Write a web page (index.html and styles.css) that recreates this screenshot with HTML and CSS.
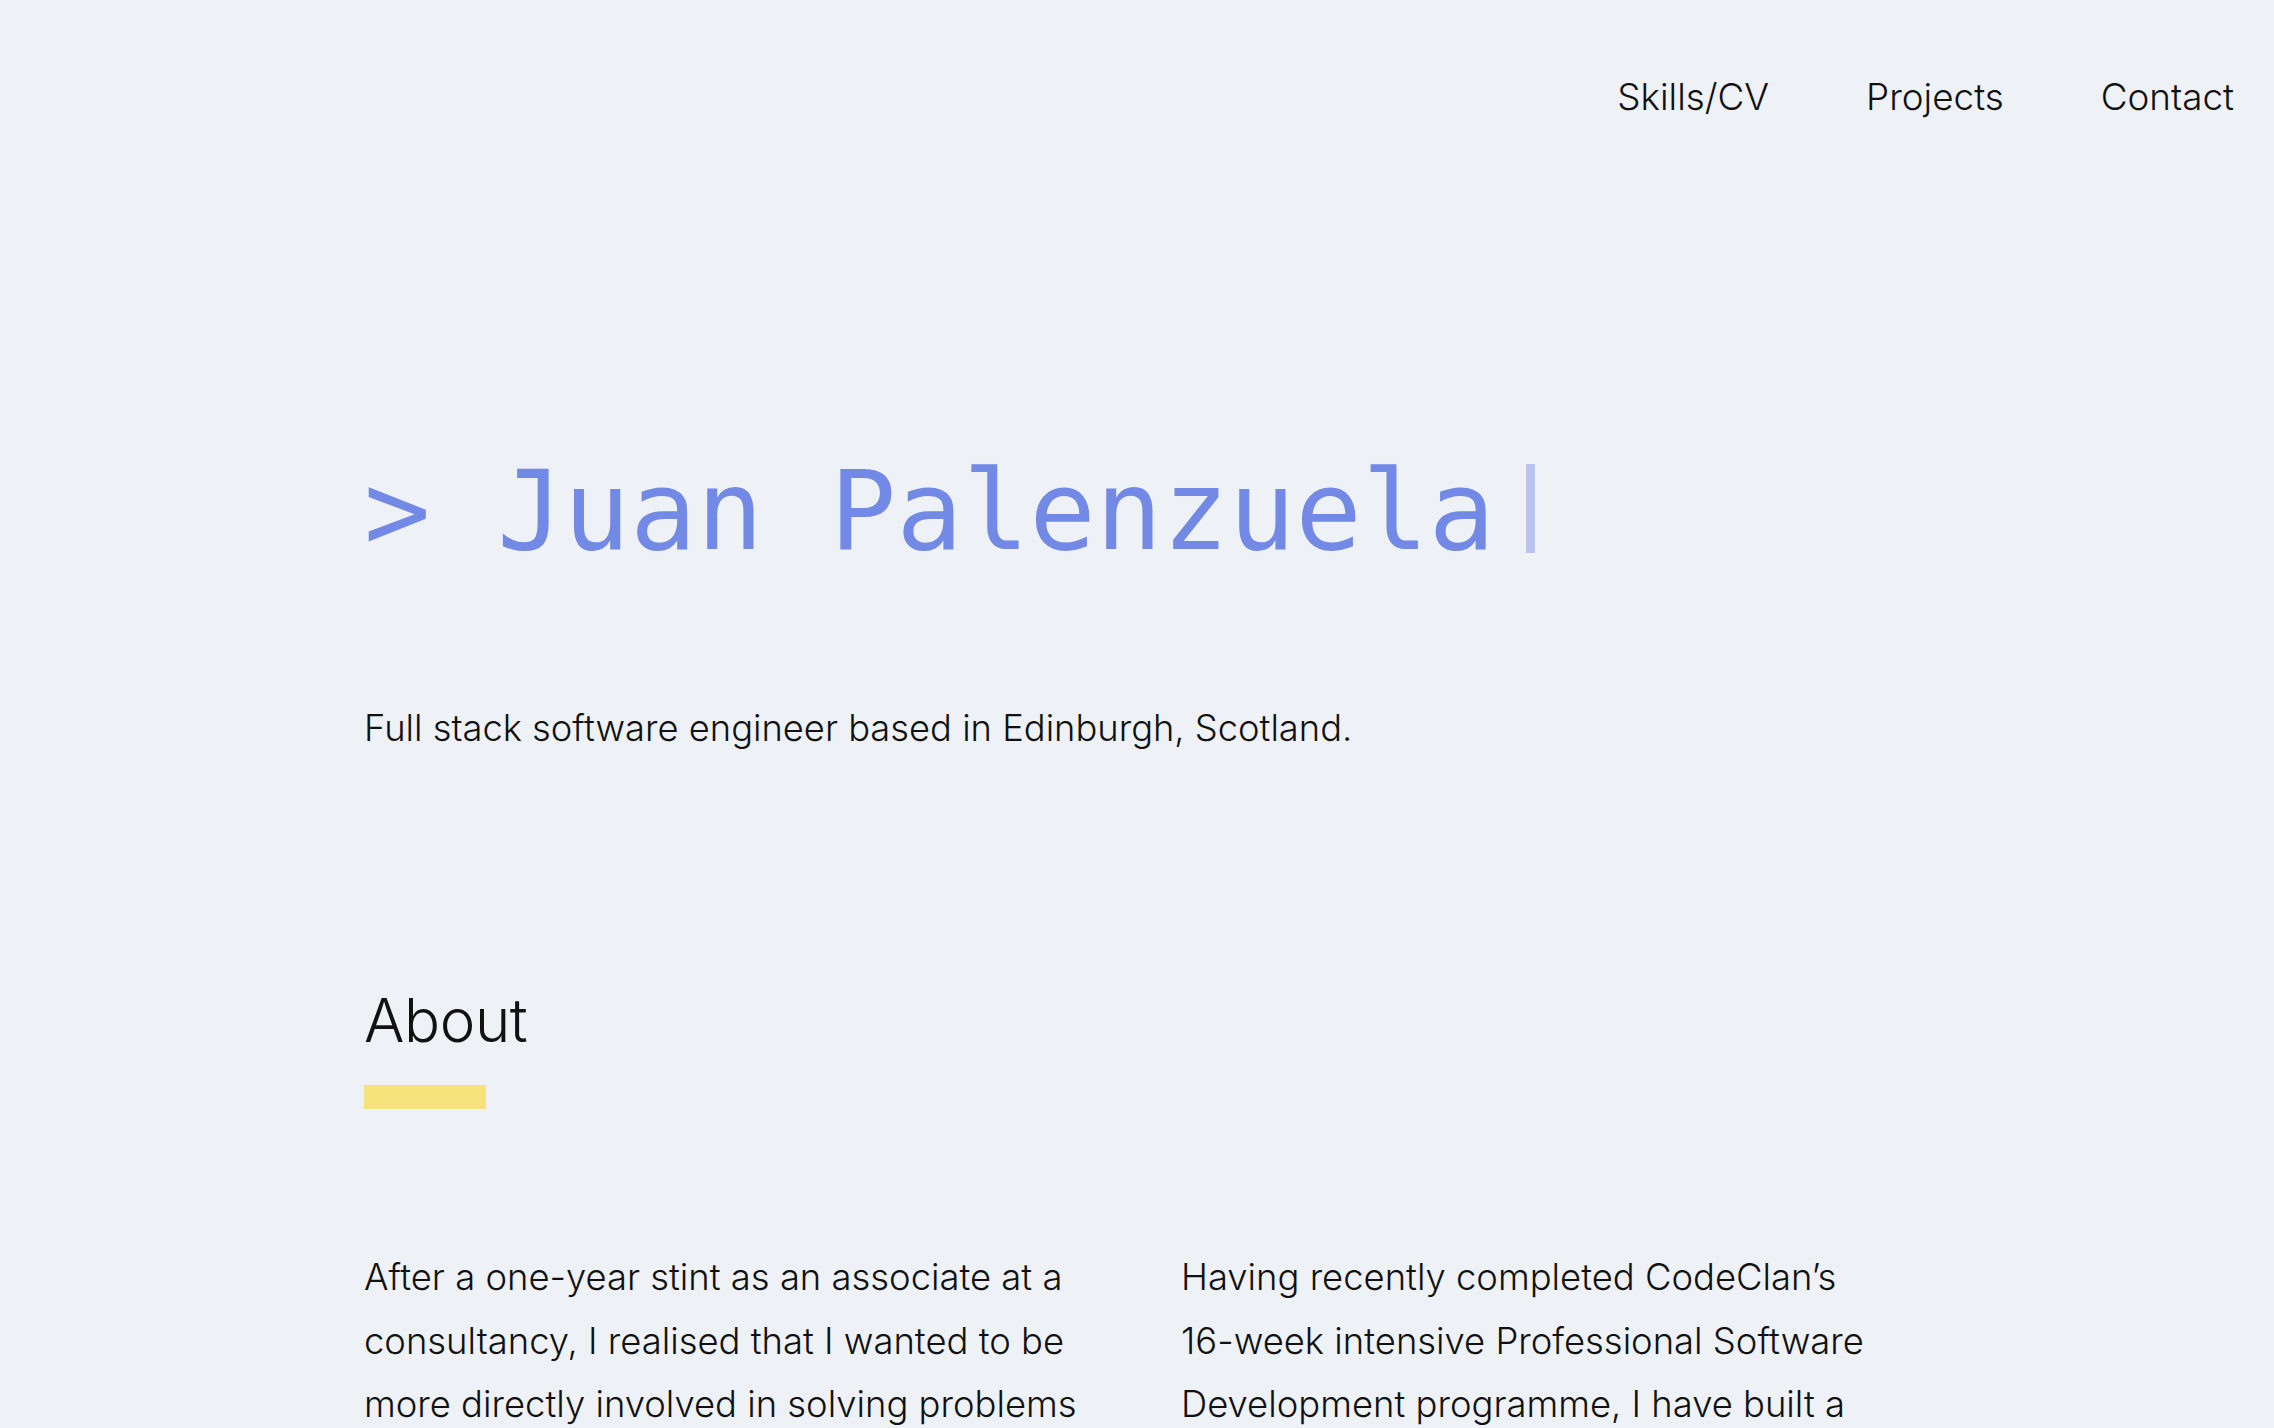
FILE: index.html
```html
<!DOCTYPE html>
<html lang="en">
<head>
<meta charset="utf-8">
<title>Juan Palenzuela</title>
<link rel="stylesheet" href="styles.css">
</head>
<body>
<header class="site-header">
  <nav class="nav">
    <a class="nav-link" href="#skills">Skills/CV</a>
    <a class="nav-link" href="#projects">Projects</a>
    <a class="nav-link" href="#contact">Contact</a>
  </nav>
</header>
<main class="content">
  <section class="hero">
    <h1 class="hero-title">&gt; Juan Palenzuela<span class="cursor"></span></h1>
    <p class="hero-sub">Full stack software engineer based in Edinburgh, Scotland.</p>
  </section>
  <section class="about">
    <h2 class="section-title">About</h2>
    <div class="section-bar"></div>
    <div class="about-cols">
      <p class="about-text">After a <span class="nowrap">one-year</span> stint as an associate at a consultancy, I realised that I wanted to be more directly involved in solving problems and building things, which led me to software development.</p>
      <p class="about-text">Having recently completed CodeClan’s <span class="nowrap">16-week</span> intensive Professional Software Development programme, I have built a solid foundation in full stack web development.</p>
    </div>
  </section>
</main>
</body>
</html>
```

FILE: styles.css
```css
html, body {
  margin: 0;
  padding: 0;
}
body {
  background: #eef1f6;
  color: #111;
  font-family: Inter, "Noto Sans", sans-serif;
  font-weight: 300;
  overflow: hidden;
  height: 1428px;
}
.nowrap {
  white-space: nowrap;
}
.site-header {
  padding: 75px 40px 0;
}
.nav {
  display: flex;
  justify-content: flex-end;
  gap: 97px;
}
.nav-link {
  font-size: 36.8px;
  line-height: 1.2;
  color: #111;
  text-decoration: none;
}
.content {
  padding: 0 364px;
}
.hero-title {
  margin: 337px 0 0;
  font-family: "DejaVu Sans Mono", monospace;
  font-weight: 400;
  font-size: 110.5px;
  line-height: 1;
  color: #7389e6;
  display: flex;
  align-items: center;
  white-space: pre;
}
.cursor {
  display: inline-block;
  width: 9px;
  height: 89px;
  margin-left: 31px;
  margin-top: -6px;
  background: #bac4f0;
}
.hero-sub {
  margin: 140px 0 0;
  font-size: 36.3px;
  line-height: 1.2;
}
.section-title {
  margin: 234px 0 0;
  font-size: 60px;
  letter-spacing: -0.4px;
  font-weight: 300;
  line-height: 1.2;
}
.section-bar {
  margin-top: 29px;
  width: 122px;
  height: 24px;
  background: #f5e27a;
}
.about-cols {
  margin-top: 137px;
  display: grid;
  grid-template-columns: 1fr 1fr;
  column-gap: 88px;
}
.about-text {
  margin: 0;
  font-size: 36.4px;
  line-height: 63.5px;
}
```
